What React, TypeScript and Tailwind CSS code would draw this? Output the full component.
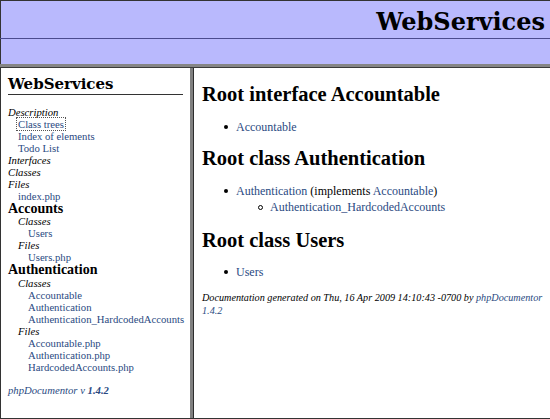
import React from "react";

const lib = { fontFamily: '"Liberation Serif", Georgia, serif' };
const dv = { fontFamily: '"DejaVu Serif", Georgia, serif' };

function L({ children, focus }: { children: React.ReactNode; focus?: boolean }) {
  return (
    <span
      className={
        "text-[#2a4a82] " +
        (focus ? "outline outline-1 outline-dotted outline-[#555] px-[1px] -mx-[1px]" : "")
      }
    >
      {children}
    </span>
  );
}

function Row({
  indent,
  children,
  cls,
}: {
  indent: number;
  children: React.ReactNode;
  cls?: string;
}) {
  const pad = indent === 0 ? "pl-0" : indent === 1 ? "pl-[10px]" : "pl-[20px]";
  return (
    <div className={"whitespace-nowrap " + pad + " " + (cls ?? "h-[12px] leading-[12px] text-[10.7px]")}>
      {children}
    </div>
  );
}

export default function App() {
  return (
    <div style={lib} className="w-[550px] h-[419px] flex flex-col bg-white text-black overflow-hidden">
      {/* top frame */}
      <div className="h-[38px] bg-[#b9b9fd] border-t border-l border-[#333] flex items-center justify-end pr-[5px]">
        <div style={dv} className="text-[24px] font-bold leading-[26px] pt-[4px]">WebServices</div>
      </div>
      <div className="h-[1px] bg-[#4b4b8e]" />
      <div className="h-[25px] bg-[#b9b9fd] border-l border-[#333]" />
      <div className="h-[3px] bg-[#858585]" />
      <div className="h-[1px] bg-[#3a3a3a]" />
      {/* main */}
      <div className="flex flex-1 min-h-0">
        {/* left frame */}
        <div className="w-[190px] border-l border-[#333] pl-[7px] pr-[7px] pt-[7px]">
          <div style={dv} className="text-[15px] font-bold leading-[19px] border-b border-[#333] h-[20px]">
            WebServices
          </div>
          <div className="mt-[11px]">
            <Row indent={0}><i>Description</i></Row>
            <Row indent={1}><L focus>Class trees</L></Row>
            <Row indent={1}><L>Index of elements</L></Row>
            <Row indent={1}><L>Todo List</L></Row>
            <Row indent={0}><i>Interfaces</i></Row>
            <Row indent={0}><i>Classes</i></Row>
            <Row indent={0}><i>Files</i></Row>
            <Row indent={1}><L>index.php</L></Row>
            <Row indent={0} cls="h-[13px] leading-[13px] text-[14px] font-bold">Accounts</Row>
            <Row indent={1}><i>Classes</i></Row>
            <Row indent={2}><L>Users</L></Row>
            <Row indent={1}><i>Files</i></Row>
            <Row indent={2}><L>Users.php</L></Row>
            <Row indent={0} cls="h-[14px] leading-[14px] text-[14px] font-bold">Authentication</Row>
            <Row indent={1}><i>Classes</i></Row>
            <Row indent={2}><L>Accountable</L></Row>
            <Row indent={2}><L>Authentication</L></Row>
            <Row indent={2}><L>Authentication_HardcodedAccounts</L></Row>
            <Row indent={1}><i>Files</i></Row>
            <Row indent={2}><L>Accountable.php</L></Row>
            <Row indent={2}><L>Authentication.php</L></Row>
            <Row indent={2}><L>HardcodedAccounts.php</L></Row>
          </div>
          <div className="mt-[11px] h-[12px] leading-[12px] text-[10.7px] italic text-[#2a4a82] whitespace-nowrap">
            phpDocumentor v <b>1.4.2</b>
          </div>
        </div>
        {/* separator */}
        <div className="w-[3px] bg-[#808080]" />
        <div className="w-[1px] bg-[#2e2e2e]" />
        {/* right frame */}
        <div className="flex-1 pl-[8px] pt-[15px]">
          <div className="text-[20.5px] font-bold leading-[22px] h-[22px] whitespace-nowrap">Root interface Accountable</div>
          <div className="mt-[15px] flex items-center h-[14px] text-[12px] leading-[14px]">
            <span className="ml-[22px] w-[4px] h-[4px] rounded-full bg-black" />
            <span className="ml-[8px]"><L>Accountable</L></span>
          </div>
          <div className="mt-[13px] text-[20.5px] font-bold leading-[22px] h-[22px] whitespace-nowrap">Root class Authentication</div>
          <div className="mt-[14px] flex items-center h-[16px] text-[12px] leading-[16px] whitespace-nowrap">
            <span className="ml-[22px] w-[4px] h-[4px] rounded-full bg-black" />
            <span className="ml-[8px]">
              <L>Authentication</L> (implements <L>Accountable</L>)
            </span>
          </div>
          <div className="flex items-center h-[16px] text-[12px] leading-[16px] whitespace-nowrap">
            <span className="ml-[56px] w-[5px] h-[5px] rounded-full border border-black" />
            <span className="ml-[7px]"><L>Authentication_HardcodedAccounts</L></span>
          </div>
          <div className="mt-[14px] text-[20.5px] font-bold leading-[22px] h-[22px] whitespace-nowrap">Root class Users</div>
          <div className="mt-[14px] flex items-center h-[14px] text-[12px] leading-[14px]">
            <span className="ml-[22px] w-[4px] h-[4px] rounded-full bg-black" />
            <span className="ml-[8px]"><L>Users</L></span>
          </div>
          <div className="mt-[13px] text-[10.2px] italic leading-[12.5px]">
            <span className="whitespace-nowrap">
              Documentation generated on Thu, 16 Apr 2009 14:10:43 -0700 by <L>phpDocumentor</L>
            </span>{" "}
            <L>1.4.2</L>
          </div>
        </div>
      </div>
      <div className="h-[1px] bg-[#333]" />
    </div>
  );
}
